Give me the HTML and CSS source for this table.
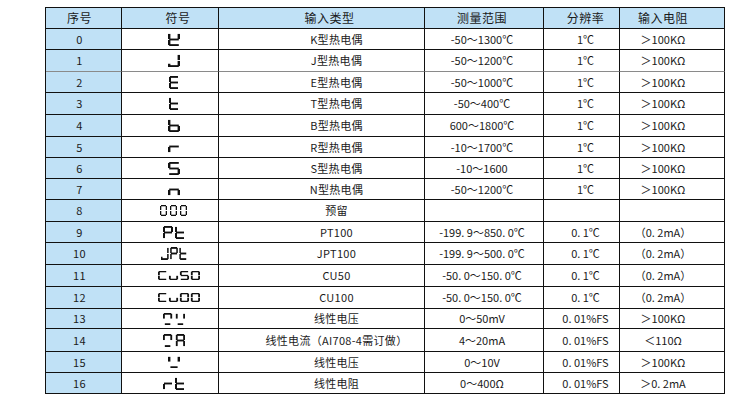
FILE: index.html
```html
<!DOCTYPE html>
<html lang="zh-CN">
<head>
<meta charset="utf-8">
<title>输入类型</title>
<link rel="stylesheet" href="styles.css">
</head>
<body>
<svg class="defs" width="0" height="0" aria-hidden="true">
  <defs>
    <rect id="sa" x="1" y="0" width="8" height="2"/>
    <rect id="sb" x="8" y="1" width="2" height="5.5"/>
    <rect id="sc" x="8" y="7.5" width="2" height="5.5"/>
    <rect id="sd" x="1" y="12" width="8" height="2"/>
    <rect id="se" x="0" y="7.5" width="2" height="5.5"/>
    <rect id="sf" x="0" y="1" width="2" height="5.5"/>
    <rect id="sg" x="1" y="6" width="8" height="2"/>
    <rect id="sj" x="0" y="10.5" width="2" height="3.5"/>
    <rect id="su" x="2" y="12" width="6" height="2"/>
    <g id="z0">
      <rect x="1" y="0" width="5" height="1.3"/>
      <rect x="0" y="1" width="1.3" height="4"/>
      <rect x="5.7" y="1" width="1.3" height="4"/>
      <rect x="0" y="6" width="1.3" height="4"/>
      <rect x="5.7" y="6" width="1.3" height="4"/>
      <rect x="1" y="9.7" width="5" height="1.3"/>
    </g>
  </defs>
</svg>

<div class="table">
  <div class="row head">
    <div class="cell c1">序号</div>
    <div class="cell c2">符号</div>
    <div class="cell c3">输入类型</div>
    <div class="cell c4">测量范围</div>
    <div class="cell c5">分辨率</div>
    <div class="cell c6">输入电阻</div>
  </div>

  <div class="row">
    <div class="cell c1">0</div>
    <div class="cell c2 sym"><svg class="g1" viewBox="0 0 10 14" preserveAspectRatio="none"><use href="#sf"/><use href="#se"/><use href="#sg"/><use href="#sd"/><use href="#sb"/></svg></div>
    <div class="cell c3">K型热电偶</div>
    <div class="cell c4">-50～1300℃</div>
    <div class="cell c5">1℃</div>
    <div class="cell c6">＞100KΩ</div>
  </div>

  <div class="row gray">
    <div class="cell c1">1</div>
    <div class="cell c2 sym"><svg class="g1" viewBox="0 0 10 14" preserveAspectRatio="none"><use href="#sb"/><use href="#sc"/><use href="#sd"/><use href="#sj"/></svg></div>
    <div class="cell c3">J型热电偶</div>
    <div class="cell c4">-50～1200℃</div>
    <div class="cell c5">1℃</div>
    <div class="cell c6">＞100KΩ</div>
  </div>

  <div class="row">
    <div class="cell c1">2</div>
    <div class="cell c2 sym"><svg class="g1 narrow" viewBox="0 0 10 14" preserveAspectRatio="none"><use href="#sa"/><use href="#sf"/><use href="#sg"/><use href="#se"/><use href="#sd"/></svg></div>
    <div class="cell c3">E型热电偶</div>
    <div class="cell c4">-50～1000℃</div>
    <div class="cell c5">1℃</div>
    <div class="cell c6">＞100KΩ</div>
  </div>

  <div class="row">
    <div class="cell c1">3</div>
    <div class="cell c2 sym"><svg class="g1 narrow" viewBox="0 0 10 14" preserveAspectRatio="none"><use href="#sf"/><use href="#se"/><use href="#sg"/><use href="#sd"/></svg></div>
    <div class="cell c3">T型热电偶</div>
    <div class="cell c4">-50～400℃</div>
    <div class="cell c5">1℃</div>
    <div class="cell c6">＞100KΩ</div>
  </div>

  <div class="row">
    <div class="cell c1">4</div>
    <div class="cell c2 sym"><svg class="g1" viewBox="0 0 10 14" preserveAspectRatio="none"><use href="#sf"/><use href="#se"/><use href="#sg"/><use href="#sc"/><use href="#sd"/></svg></div>
    <div class="cell c3">B型热电偶</div>
    <div class="cell c4">600～1800℃</div>
    <div class="cell c5">1℃</div>
    <div class="cell c6">＞100KΩ</div>
  </div>

  <div class="row">
    <div class="cell c1">5</div>
    <div class="cell c2 sym"><svg class="g1 up" viewBox="0 0 10 14" preserveAspectRatio="none"><use href="#se"/><use href="#sg"/></svg></div>
    <div class="cell c3">R型热电偶</div>
    <div class="cell c4">-10～1700℃</div>
    <div class="cell c5">1℃</div>
    <div class="cell c6">＞100KΩ</div>
  </div>

  <div class="row">
    <div class="cell c1">6</div>
    <div class="cell c2 sym"><svg class="g1" viewBox="0 0 10 14" preserveAspectRatio="none"><use href="#sa"/><use href="#sf"/><use href="#sg"/><use href="#sc"/><use href="#sd"/></svg></div>
    <div class="cell c3">S型热电偶</div>
    <div class="cell c4">-10～1600</div>
    <div class="cell c5">1℃</div>
    <div class="cell c6">＞100KΩ</div>
  </div>

  <div class="row">
    <div class="cell c1">7</div>
    <div class="cell c2 sym"><svg class="g1" viewBox="0 0 10 14" preserveAspectRatio="none"><use href="#se"/><use href="#sg"/><use href="#sc"/></svg></div>
    <div class="cell c3">N型热电偶</div>
    <div class="cell c4">-50～1200℃</div>
    <div class="cell c5">1℃</div>
    <div class="cell c6">＞100KΩ</div>
  </div>

  <div class="row">
    <div class="cell c1">8</div>
    <div class="cell c2 sym"><svg class="g000" viewBox="0 0 27 11"><use href="#z0"/><use href="#z0" x="10"/><use href="#z0" x="20"/></svg></div>
    <div class="cell c3">预留</div>
    <div class="cell c4"></div>
    <div class="cell c5"></div>
    <div class="cell c6"></div>
  </div>

  <div class="row">
    <div class="cell c1">9</div>
    <div class="cell c2 sym"><svg class="g2" viewBox="0 0 22 14" preserveAspectRatio="none"><use href="#sa"/><use href="#sb"/><use href="#sf"/><use href="#sg"/><use href="#se"/><g transform="translate(12 0)"><use href="#sf"/><use href="#se"/><use href="#sg"/><use href="#sd"/></g></svg></div>
    <div class="cell c3">PT100</div>
    <div class="cell c4">-199. 9～850. 0℃</div>
    <div class="cell c5">0. 1℃</div>
    <div class="cell c6">（0. 2mA）</div>
  </div>

  <div class="row">
    <div class="cell c1">10</div>
    <div class="cell c2 sym"><svg class="g3" viewBox="0 0 34 14" preserveAspectRatio="none"><use href="#sb"/><use href="#sc"/><use href="#sd"/><use href="#sj"/><g transform="translate(12 0)"><use href="#sa"/><use href="#sb"/><use href="#sf"/><use href="#sg"/><use href="#se"/></g><g transform="translate(24 0)"><use href="#sf"/><use href="#se"/><use href="#sg"/><use href="#sd"/></g></svg></div>
    <div class="cell c3">JPT100</div>
    <div class="cell c4">-199. 9～500. 0℃</div>
    <div class="cell c5">0. 1℃</div>
    <div class="cell c6">（0. 2mA）</div>
  </div>

  <div class="row">
    <div class="cell c1">11</div>
    <div class="cell c2 sym"><svg class="g4" viewBox="0 0 46 14" preserveAspectRatio="none"><use href="#sa"/><use href="#sf"/><use href="#se"/><use href="#sd"/><g transform="translate(12 0)"><use href="#se"/><use href="#sd"/><use href="#sc"/></g><g transform="translate(24 0)"><use href="#sa"/><use href="#sf"/><use href="#sg"/><use href="#sc"/><use href="#sd"/></g><g transform="translate(36 0)"><use href="#sa"/><use href="#sb"/><use href="#sc"/><use href="#sd"/><use href="#se"/><use href="#sf"/></g></svg></div>
    <div class="cell c3">CU50</div>
    <div class="cell c4">-50. 0～150. 0℃</div>
    <div class="cell c5">0. 1℃</div>
    <div class="cell c6">（0. 2mA）</div>
  </div>

  <div class="row">
    <div class="cell c1">12</div>
    <div class="cell c2 sym"><svg class="g4" viewBox="0 0 46 14" preserveAspectRatio="none"><use href="#sa"/><use href="#sf"/><use href="#se"/><use href="#sd"/><g transform="translate(12 0)"><use href="#se"/><use href="#sd"/><use href="#sc"/></g><g transform="translate(24 0)"><use href="#sa"/><use href="#sb"/><use href="#sc"/><use href="#sd"/><use href="#se"/><use href="#sf"/></g><g transform="translate(36 0)"><use href="#sa"/><use href="#sb"/><use href="#sc"/><use href="#sd"/><use href="#se"/><use href="#sf"/></g></svg></div>
    <div class="cell c3">CU100</div>
    <div class="cell c4">-50. 0～150. 0℃</div>
    <div class="cell c5">0. 1℃</div>
    <div class="cell c6">（0. 2mA）</div>
  </div>

  <div class="row">
    <div class="cell c1">13</div>
    <div class="cell c2 sym"><svg class="g2 short" viewBox="0 0 24 14" preserveAspectRatio="none"><use href="#sa"/><use href="#sf"/><use href="#sb"/><use href="#su"/><g transform="translate(14 0)"><use href="#sf"/><use href="#sb"/><use href="#su"/></g></svg></div>
    <div class="cell c3">线性电压</div>
    <div class="cell c4">0～50mV</div>
    <div class="cell c5">0. 01%FS</div>
    <div class="cell c6">＞100KΩ</div>
  </div>

  <div class="row">
    <div class="cell c1">14</div>
    <div class="cell c2 sym"><svg class="g2" viewBox="0 0 24 14" preserveAspectRatio="none"><use href="#sa"/><use href="#sf"/><use href="#sb"/><use href="#su"/><g transform="translate(14 0)"><use href="#sa"/><use href="#sb"/><use href="#sc"/><use href="#se"/><use href="#sf"/><use href="#sg"/></g></svg></div>
    <div class="cell c3">线性电流（AI708-4需订做）</div>
    <div class="cell c4">4～20mA</div>
    <div class="cell c5">0. 01%FS</div>
    <div class="cell c6">＜110Ω</div>
  </div>

  <div class="row">
    <div class="cell c1">15</div>
    <div class="cell c2 sym"><svg class="g1 short" viewBox="0 0 10 14" preserveAspectRatio="none"><use href="#sf"/><use href="#sb"/><use href="#su"/></svg></div>
    <div class="cell c3">线性电压</div>
    <div class="cell c4">0～10V</div>
    <div class="cell c5">0. 01%FS</div>
    <div class="cell c6">＞100KΩ</div>
  </div>

  <div class="row">
    <div class="cell c1">16</div>
    <div class="cell c2 sym"><svg class="g2" viewBox="0 0 22 14" preserveAspectRatio="none"><use href="#se"/><use href="#sg"/><g transform="translate(12 0)"><use href="#sf"/><use href="#se"/><use href="#sg"/><use href="#sd"/></g></svg></div>
    <div class="cell c3">线性电阻</div>
    <div class="cell c4">0～400Ω</div>
    <div class="cell c5">0. 01%FS</div>
    <div class="cell c6">＞0. 2mA</div>
  </div>
</div>
</body>
</html>
```

FILE: styles.css
```css
html, body {
  margin: 0;
  padding: 0;
  background: #ffffff;
}

body {
  font-family: "Noto Sans CJK SC", "Liberation Sans", sans-serif;
  font-size: 11px;
  color: #1a1a1a;
}

.defs {
  display: block;
  width: 0;
  height: 0;
}

.table {
  display: grid;
  grid-template-columns: 76px 97px 206px 119px 76px 105px;
  grid-template-rows: 21px 21px 22px 21px 22px 22px 21px 21px 21px 22px 21px 22px 22px 22px 20px 23px 21px 21px;
  width: max-content;
  margin: 7px 0 0 45px;
  border-top: 1px solid #111;
  border-left: 1px solid #111;
}

.row {
  display: contents;
}

.cell {
  box-sizing: border-box;
  display: flex;
  align-items: center;
  justify-content: center;
  border-right: 1px solid #111;
  border-bottom: 1px solid #111;
  white-space: nowrap;
  letter-spacing: 0.3px;
  line-height: 1;
}

.row.gray .cell {
  border-bottom-color: #8a8a8a;
}

.head .cell {
  background: #c0e1f6;
  font-size: 12px;
  letter-spacing: 0.5px;
}

.c1 {
  background: #c0e1f6;
  padding-right: 8px;
}

.head .c2 {
  padding-left: 16px;
}

.c3 {
  padding-left: 30px;
}

.head .c3 {
  padding-left: 16px;
}

.c4,
.c5,
.c6 {
  letter-spacing: 0;
}

.c4 {
  padding-right: 4px;
}

.c5 {
  padding-left: 8px;
}

.c6 {
  padding-right: 18px;
}

.sym {
  padding-left: 7px;
}

.sym svg {
  fill: #111;
  display: block;
}

.g1 {
  width: 12px;
  height: 13px;
}

.g1.narrow {
  width: 10px;
}

.g1.up {
  margin-top: -2px;
}

.g1.short,
.g2.short {
  height: 12px;
}

.g000 {
  width: 27px;
  height: 11px;
}

.g2 {
  width: 22px;
  height: 13px;
}

.g3 {
  width: 26px;
  height: 13px;
}

.g4 {
  width: 42px;
  height: 9px;
  margin-left: 10px;
}
```
